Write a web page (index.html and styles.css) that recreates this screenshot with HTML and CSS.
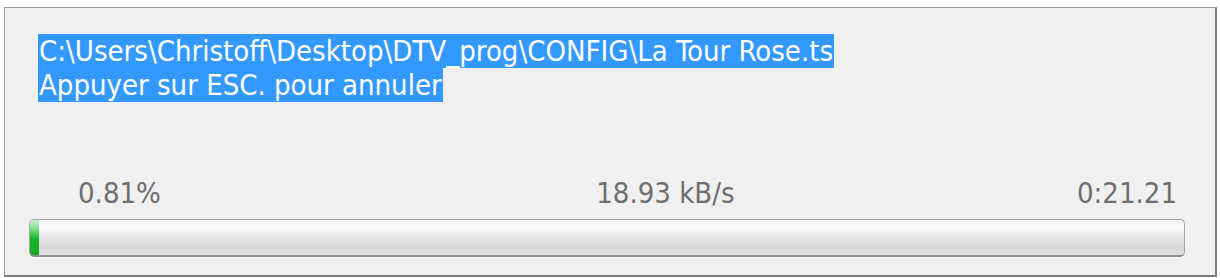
FILE: index.html
```html
<!DOCTYPE html>
<html>
<head>
  <meta name="viewport" content="width=device-width, initial-scale=1.0">
  <title>Copie en cours</title>
  <link rel="stylesheet" href="styles.css">
</head>
<body>
  <div class="dialog">
    <!-- Selected message text -->
    <div class="message">
      <span class="selected">C:\Users\Christoff\Desktop\DTV_prog\CONFIG\La Tour Rose.ts</span><br>
      <span class="selected">Appuyer sur ESC. pour annuler</span>
    </div>

    <!-- Progress info -->
    <div class="stats">
      <span class="percent">0.81%</span>
      <span class="speed">18.93 kB/s</span>
      <span class="time">0:21.21</span>
    </div>

    <div class="progress">
      <div class="progress-fill" style="width: 0.81%"></div>
    </div>
  </div>
</body>
</html>
```

FILE: styles.css
```css
/* White page around the dialog */
body {
  margin: 0;
  padding: 0;
  background-color: #ffffff;
  font-family: Tahoma, "DejaVu Sans Condensed", "DejaVu Sans", sans-serif;
}

.dialog {
  margin: 7px 3px 0 4px;
  height: 270px;
  background-color: #f0f0f0;
  border: 1px solid #9a9a9a;
  border-right: 2px solid #7d7d7d;
  border-bottom: 2px solid #7d7d7d;
  box-sizing: border-box;
}

.message {
  padding: 26px 0 0 33px;
  font-size: 29px;
  line-height: 34px;
  height: 101px;
}

/* Text shown as highlighted selection */
.selected {
  background-color: #3399ff;
  color: #ffffff;
  padding: 0 1px;
}

.stats {
  display: flex;
  justify-content: space-between;
  align-items: baseline;
  margin-top: 42px;
  padding: 0 38px 0 73px;
  font-size: 29px;
  line-height: 32px;
  color: #6e6e6e;
}

.speed {
  margin-left: 93px;
}

/* Progress bar: light gradient trough */
.progress {
  margin: 10px 0 0 24px;
  width: 1156px;
  height: 38px;
  border: 1px solid #a4a4a4;
  border-bottom: 2px solid #8e8e8e;
  border-radius: 5px;
  box-sizing: border-box;
  background: linear-gradient(to bottom, #f2f2f2 0%, #fdfdfd 22%, #e8e8e8 45%, #d8d8d8 75%, #dedede 100%);
  overflow: hidden;
  box-shadow: 0 1px 0 #ffffff;
}

.progress-fill {
  height: 100%;
  min-width: 7px;
  background: linear-gradient(to bottom, #c8f0cc 0%, #7ee08a 25%, #12b52a 55%, #14a82a 100%);
}
```
